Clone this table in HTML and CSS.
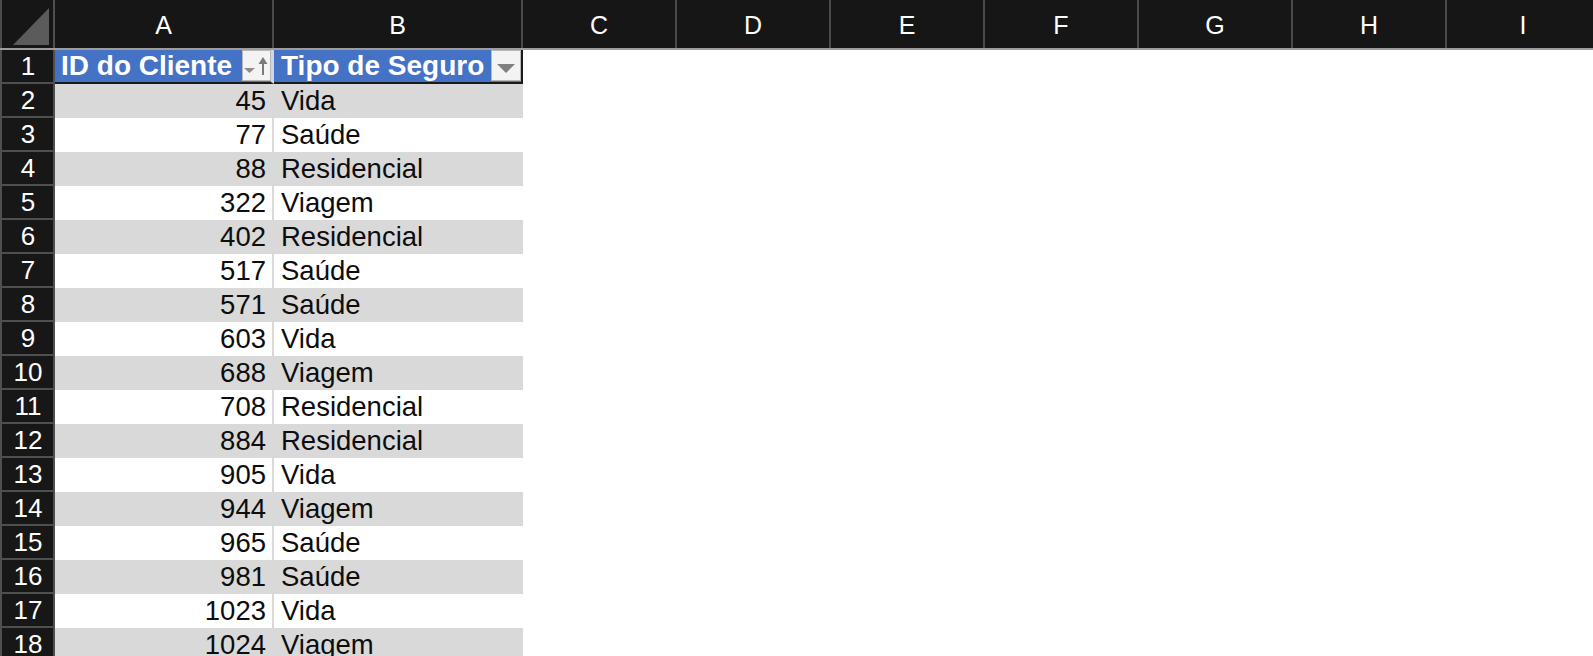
FILE: index.html
```html
<!DOCTYPE html>
<html lang="pt">
<head>
<meta charset="utf-8">
<title>Planilha</title>
<link rel="stylesheet" href="styles.css">
</head>
<body>
<div class="sheet">
  <div class="row colhead">
    <div class="corner"><svg class="corner-tri" width="51" height="48" viewBox="0 0 51 48"><polygon points="11,45 47,45 47,8" fill="#5b5b5b"/></svg></div>
    <div class="ch">A</div><div class="ch">B</div><div class="ch">C</div><div class="ch">D</div><div class="ch">E</div><div class="ch">F</div><div class="ch">G</div><div class="ch">H</div><div class="ch">I</div>
  </div>
  <div class="row hdr">
    <div class="rh">1</div>
    <div class="th tha"><span class="tht">ID do Cliente</span>
      <span class="fbtn fa"><svg width="27" height="29" viewBox="0 0 27 29"><polygon points="1,17 12,17 6.5,22" fill="#8c8c8c"/><line x1="20" y1="9" x2="20" y2="24" stroke="#7a7a7a" stroke-width="2"/><polygon points="15.5,13 24.5,13 20,6" fill="#7a7a7a"/></svg></span>
    </div>
    <div class="th thb"><span class="tht">Tipo de Seguro</span>
      <span class="fbtn fb"><svg width="28" height="29" viewBox="0 0 28 29"><polygon points="5,13 23,13 14,22" fill="#808080"/></svg></span>
    </div>
    <div></div><div></div><div></div><div></div><div></div><div></div><div></div>
  </div>
  <div class="row alt"><div class="rh">2</div><div class="ca">45</div><div class="cb">Vida</div></div>
  <div class="row"><div class="rh">3</div><div class="ca">77</div><div class="cb">Saúde</div></div>
  <div class="row alt"><div class="rh">4</div><div class="ca">88</div><div class="cb">Residencial</div></div>
  <div class="row"><div class="rh">5</div><div class="ca">322</div><div class="cb">Viagem</div></div>
  <div class="row alt"><div class="rh">6</div><div class="ca">402</div><div class="cb">Residencial</div></div>
  <div class="row"><div class="rh">7</div><div class="ca">517</div><div class="cb">Saúde</div></div>
  <div class="row alt"><div class="rh">8</div><div class="ca">571</div><div class="cb">Saúde</div></div>
  <div class="row"><div class="rh">9</div><div class="ca">603</div><div class="cb">Vida</div></div>
  <div class="row alt"><div class="rh">10</div><div class="ca">688</div><div class="cb">Viagem</div></div>
  <div class="row"><div class="rh">11</div><div class="ca">708</div><div class="cb">Residencial</div></div>
  <div class="row alt"><div class="rh">12</div><div class="ca">884</div><div class="cb">Residencial</div></div>
  <div class="row"><div class="rh">13</div><div class="ca">905</div><div class="cb">Vida</div></div>
  <div class="row alt"><div class="rh">14</div><div class="ca">944</div><div class="cb">Viagem</div></div>
  <div class="row"><div class="rh">15</div><div class="ca">965</div><div class="cb">Saúde</div></div>
  <div class="row alt"><div class="rh">16</div><div class="ca">981</div><div class="cb">Saúde</div></div>
  <div class="row"><div class="rh">17</div><div class="ca">1023</div><div class="cb">Vida</div></div>
  <div class="row alt"><div class="rh">18</div><div class="ca">1024</div><div class="cb">Viagem</div></div>
</div>
</body>
</html>
```

FILE: styles.css
```css
* { box-sizing: border-box; margin: 0; padding: 0; }
html, body { width: 1593px; height: 656px; overflow: hidden; background: #ffffff; }
body { font-family: "Liberation Sans", Arial, Helvetica, sans-serif; color: #111111; }

.sheet { display: flex; flex-direction: column; width: 1602px; }

.row {
  display: grid;
  grid-template-columns: 55px 219px 249px repeat(7, 154px);
  height: 34px;
  flex: none;
}

/* column header */
.colhead {
  height: 50px;
  background: #161616;
  border-bottom: 2px solid #9d9d9d;
}
.corner {
  border-left: 2px solid #4b4b4b;
  border-right: 2px solid #4f4f4f;
  display: flex;
}
.corner-tri { display: block; }
.ch {
  color: #ffffff;
  font-size: 25px;
  display: flex;
  align-items: center;
  justify-content: center;
  padding-top: 3px;
  border-right: 2px solid #4a4a4a;
}

/* row header */
.rh {
  background: #171717;
  color: #ffffff;
  font-size: 26px;
  display: flex;
  align-items: center;
  justify-content: center;
  padding-left: 1px;
  border-left: 2px solid #4f4f4f;
  border-right: 2px solid #4f4f4f;
  border-bottom: 2px solid #4f4f4f;
}

/* table header row */
.th {
  background: #4472c4;
  color: #ffffff;
  font-weight: bold;
  font-size: 28px;
  display: flex;
  align-items: flex-start;
  border-bottom: 2px solid #1a1a1a;
  overflow: hidden;
}
.tht { padding-left: 6px; line-height: 32px; white-space: nowrap; }
.tha { border-right: 3px solid #cfd6e3; }
.thb { border-right: 2px solid #1a1a1a; padding-left: 1px; }
.fbtn {
  margin-left: auto;
  flex: none;
  height: 31px;
  background: #f3f3f3;
  border: 1px solid #b8b8b8;
  display: flex;
}
.fbtn svg { display: block; }
.fa { width: 29px; }
.fb { width: 30px; }

/* data cells */
.ca, .cb {
  font-size: 27.5px;
  display: flex;
  align-items: center;
  white-space: nowrap;
  color: #0d0d0d;
}
.ca {
  justify-content: flex-end;
  padding-right: 6px;
  border-right: 2px solid #d9d9d9;
}
.cb { padding-left: 7px; }
.alt .ca, .alt .cb { background: #d9d9d9; }
```
